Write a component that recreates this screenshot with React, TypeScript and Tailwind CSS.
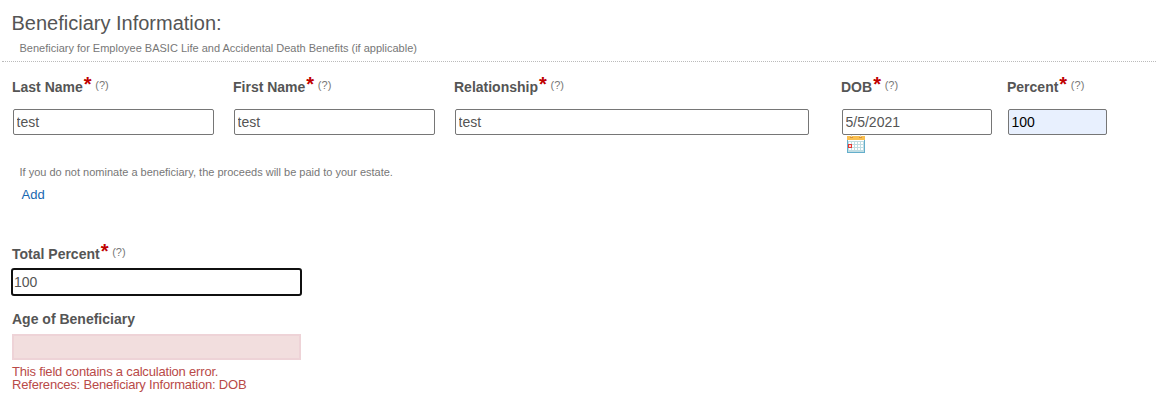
import React from 'react';

function Label({ text, required = true }: { text: string; required?: boolean }) {
  return (
    <div className="flex h-5 items-start whitespace-nowrap text-sm leading-5 font-bold text-[#555]">
      <label>{text}</label>
      {required && (
        <>
          <span className="-mt-[3px] ml-[1px] w-[7.5px] text-[20px] leading-5 font-bold text-[#c00000]">*</span>
          <span className="-mt-[2px] ml-[4px] text-[11px] leading-5 font-normal text-[#777]">(?)</span>
        </>
      )}
    </div>
  );
}

const inputBase = 'block h-[26px] rounded-[2px] border border-[#767676] px-[2.5px] py-0 text-sm outline-none';

function CalendarIcon() {
  return (
    <svg width="18" height="18" viewBox="0 0 18 18" shapeRendering="crispEdges" aria-label="Pick a date">
      <rect x="0" y="1" width="18" height="17" fill="#64aecb" />
      <rect x="1" y="5" width="16" height="12" fill="#c0dde3" />
      <g fill="#fff">
        <rect x="1" y="5" width="16" height="1" />
        {[7, 10, 13].map((y) =>
          [2, 5, 8, 11, 14].map((x) => <rect key={`${x}-${y}`} x={x} y={y} width="2" height="2" />),
        )}
      </g>
      <rect x="0" y="1" width="18" height="4" fill="#f9bf50" />
      <rect x="4" y="0" width="1" height="2" fill="#e8dcc8" />
      <rect x="13" y="0" width="1" height="2" fill="#e8dcc8" />
      <rect x="3" y="2" width="3" height="1" fill="#d7923a" />
      <rect x="12" y="2" width="3" height="1" fill="#d7923a" />
      <rect x="1.5" y="9.5" width="3" height="3" fill="#ffd6d0" stroke="#e53935" />
    </svg>
  );
}

export default function App() {
  return (
    <main className="h-[417px] w-[1156px] overflow-hidden bg-white font-['Liberation_Sans',Arial,sans-serif] text-[#555]">
      <header className="ml-[2px] h-[62px] border-b border-dotted border-[#bbb] pt-[11px]">
        <h1 className="ml-[9.5px] h-6 text-[20px] leading-6">Beneficiary Information:</h1>
        <p className="mt-[6px] ml-[17.5px] text-[11px] leading-[14px] text-[#777]">
          Beneficiary for Employee BASIC Life and Accidental Death Benefits (if applicable)
        </p>
      </header>

      <section className="flex pt-[15px] pl-3">
        <div className="w-[221px]">
          <Label text="Last Name" />
          <input className={`${inputBase} mt-3 ml-px w-[201px]`} defaultValue="test" />
        </div>
        <div className="w-[221px]">
          <Label text="First Name" />
          <input className={`${inputBase} mt-3 ml-px w-[201px]`} defaultValue="test" />
        </div>
        <div className="w-[387px]">
          <Label text="Relationship" />
          <input className={`${inputBase} mt-3 ml-px w-[354px]`} defaultValue="test" />
        </div>
        <div className="w-[166px]">
          <Label text="DOB" />
          <input className={`${inputBase} mt-3 ml-px w-[150px]`} defaultValue="5/5/2021" />
          <div className="ml-[6px] h-[18px]">
            <CalendarIcon />
          </div>
        </div>
        <div>
          <Label text="Percent" />
          <input className={`${inputBase} mt-3 ml-px w-[99px] bg-[#e8f0fe] text-black`} defaultValue="100" />
        </div>
      </section>

      <p className="mt-3 ml-[19.5px] text-[11px] leading-[14px] text-[#777]">
        If you do not nominate a beneficiary, the proceeds will be paid to your estate.
      </p>
      <a className="mt-[8px] ml-[21.5px] block w-fit text-[13px] leading-4 text-[#1767b0]" href="#add">
        Add
      </a>

      <section className="mt-[41px] ml-3">
        <Label text="Total Percent" />
        <input
          className="-ml-px mt-[4px] block h-7 w-[291px] rounded-[3px] border-2 border-[#101010] px-px py-0 text-sm outline-none"
          defaultValue="100"
        />
        <div className="mt-[13px]">
          <Label text="Age of Beneficiary" required={false} />
        </div>
        <input
          className="mt-[5px] block h-[26px] w-[289px] border-2 border-[#eed3d7] bg-[#f2dede] outline-none"
          aria-label="Age of Beneficiary"
          readOnly
        />
        <p className="mt-[5px] text-[13px] leading-[13px] tracking-[-0.19px] text-[#b94a48]">
          This field contains a calculation error.
          <br />
          References: Beneficiary Information: DOB
        </p>
      </section>
    </main>
  );
}
